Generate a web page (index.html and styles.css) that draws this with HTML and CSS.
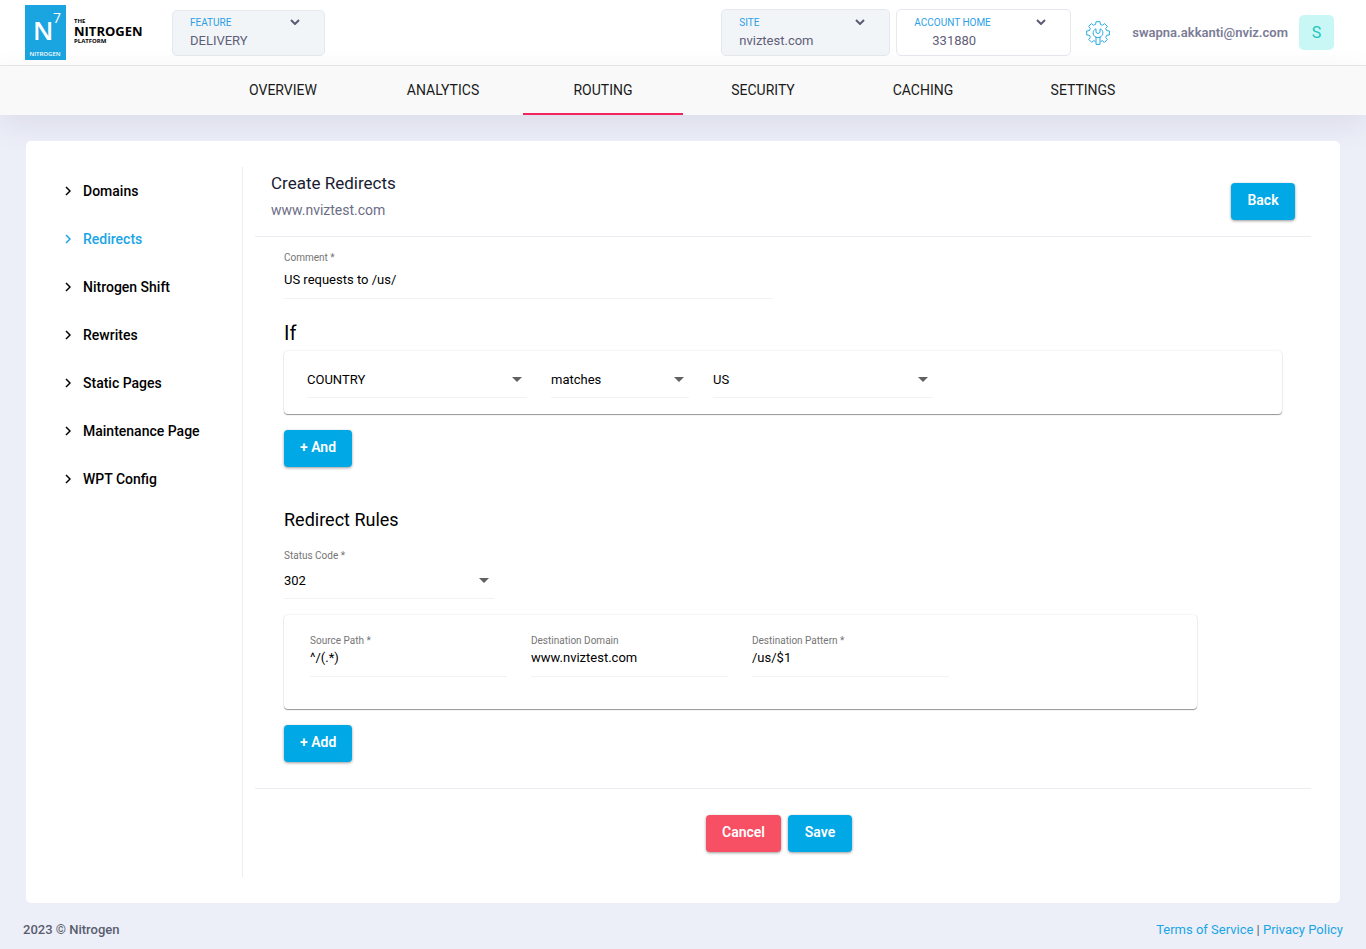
FILE: index.html
```html
<!DOCTYPE html>
<html lang="en">
<head>
<meta charset="utf-8">
<meta name="viewport" content="width=device-width, initial-scale=1">
<title>Create Redirects - Nitrogen</title>
<link rel="stylesheet" href="styles.css">
</head>
<body>
<header class="topbar">
  <a class="logo" href="#" aria-label="The Nitrogen Platform">
    <svg class="logo-art" viewBox="0 0 124 55" width="124" height="55">
      <rect width="41" height="55" fill="#1aa5e0"/>
      <g fill="#fff">
        <text x="8" y="35" font-size="26" font-weight="600">N</text>
        <text x="28" y="18" font-size="14">7</text>
        <text x="20" y="51" font-size="6" font-weight="600" text-anchor="middle">NITROGEN</text>
      </g>
      <g fill="#000" font-weight="700">
        <text x="49" y="18" font-size="6">THE</text>
        <text x="49" y="31" font-size="13">NITROGEN</text>
        <text x="49" y="38" font-size="6">PLATFORM</text>
      </g>
    </svg>
  </a>
  <button class="picker picker-feature" type="button">
    <span class="picker-head">FEATURE
      <svg class="chevron" viewBox="0 0 10 6" width="10" height="6"><path d="M1 1l4 4 4-4"/></svg>
    </span>
    <span class="picker-value">DELIVERY</span>
  </button>
  <div class="topbar-right">
    <button class="picker picker-site" type="button">
      <span class="picker-head">SITE
        <svg class="chevron" viewBox="0 0 10 6" width="10" height="6"><path d="M1 1l4 4 4-4"/></svg>
      </span>
      <span class="picker-value">nviztest.com</span>
    </button>
    <button class="picker picker-account" type="button">
      <span class="picker-head">ACCOUNT HOME
        <svg class="chevron" viewBox="0 0 10 6" width="10" height="6"><path d="M1 1l4 4 4-4"/></svg>
      </span>
      <span class="picker-value">331880</span>
    </button>
    <button class="gear" type="button" aria-label="Account settings">
      <svg viewBox="0 0 24 24" width="24" height="24" fill="none" stroke="#27aae1" stroke-width="1" stroke-linejoin="round" stroke-linecap="round">
        <path d="M9 20.3L7.6 19.7 5.7 21.4 2.7 18.4 4.3 16.4 3.5 14.3.7 14V10L3.5 9.5 4.3 7.5 2.7 5.4 5.4 2.6 7.6 4.3 9.6 3.4 10 .7H14L14.4 3.4 16.4 4.3 18.6 2.6 21.4 5.4 19.7 7.5 20.5 9.5 23.4 10V14L20.5 14.3 19.7 16.4 21.4 18.4 18.4 21.4 16.4 19.7 15 20.3"/>
        <path d="M10 16V23.4H14V16M10 16.3C5.8 14.5 6.4 9 10 7.8V11.4L12 12.6 14 11.4V7.8C17.6 9 18.2 14.5 14 16.3Z"/>
      </svg>
    </button>
    <span class="email">swapna.akkanti@nviz.com</span>
    <button class="avatar" type="button" aria-label="User menu">S</button>
  </div>
</header>

<nav class="tabs" aria-label="Main">
  <a class="tab" href="#">OVERVIEW</a>
  <a class="tab" href="#">ANALYTICS</a>
  <a class="tab tab-active" href="#" aria-current="page">ROUTING</a>
  <a class="tab" href="#">SECURITY</a>
  <a class="tab" href="#">CACHING</a>
  <a class="tab" href="#">SETTINGS</a>
</nav>

<main class="panel">
  <nav class="side" aria-label="Routing">
    <a class="side-link" href="#"><svg class="arrow" viewBox="0 0 6 10" width="6" height="10"><path d="M1 1l4 4-4 4"/></svg>Domains</a>
    <a class="side-link side-active" href="#"><svg class="arrow" viewBox="0 0 6 10" width="6" height="10"><path d="M1 1l4 4-4 4"/></svg>Redirects</a>
    <a class="side-link" href="#"><svg class="arrow" viewBox="0 0 6 10" width="6" height="10"><path d="M1 1l4 4-4 4"/></svg>Nitrogen Shift</a>
    <a class="side-link" href="#"><svg class="arrow" viewBox="0 0 6 10" width="6" height="10"><path d="M1 1l4 4-4 4"/></svg>Rewrites</a>
    <a class="side-link" href="#"><svg class="arrow" viewBox="0 0 6 10" width="6" height="10"><path d="M1 1l4 4-4 4"/></svg>Static Pages</a>
    <a class="side-link" href="#"><svg class="arrow" viewBox="0 0 6 10" width="6" height="10"><path d="M1 1l4 4-4 4"/></svg>Maintenance Page</a>
    <a class="side-link" href="#"><svg class="arrow" viewBox="0 0 6 10" width="6" height="10"><path d="M1 1l4 4-4 4"/></svg>WPT Config</a>
  </nav>

  <form class="content">
    <div class="content-head">
      <div class="heading">
        <h1 class="title">Create Redirects</h1>
        <p class="subtitle">www.nviztest.com</p>
      </div>
      <button class="btn" type="button">Back</button>
    </div>

    <div class="form-body">
      <div class="field field-comment">
        <label class="field-label" for="comment">Comment *</label>
        <input class="control" id="comment" type="text" value="US requests to /us/">
      </div>

      <h2 class="section-if">If</h2>
      <div class="card card-if">
        <div class="select select-wide">
          <select class="control" aria-label="Condition"><option>COUNTRY</option></select>
        </div>
        <div class="select select-narrow">
          <select class="control" aria-label="Operator"><option>matches</option></select>
        </div>
        <div class="select select-wide">
          <select class="control" aria-label="Value"><option>US</option></select>
        </div>
      </div>
      <button class="btn" type="button">+ And</button>

      <h2 class="section-rules">Redirect Rules</h2>
      <div class="field field-status">
        <label class="field-label" for="status">Status Code *</label>
        <div class="select">
          <select class="control" id="status"><option>302</option></select>
        </div>
      </div>
      <div class="card card-rules">
        <div class="field">
          <label class="field-label" for="source">Source Path *</label>
          <input class="control" id="source" type="text" value="^/(.*)">
        </div>
        <div class="field">
          <label class="field-label" for="domain">Destination Domain</label>
          <input class="control" id="domain" type="text" value="www.nviztest.com">
        </div>
        <div class="field">
          <label class="field-label" for="pattern">Destination Pattern *</label>
          <input class="control" id="pattern" type="text" value="/us/$1">
        </div>
      </div>
      <button class="btn" type="button">+ Add</button>
    </div>

    <div class="actions">
      <button class="btn btn-cancel" type="button">Cancel</button>
      <button class="btn" type="submit">Save</button>
    </div>
  </form>
</main>

<footer class="footer">
  <span class="copyright">2023 © Nitrogen</span>
  <span class="legal"><a href="#">Terms of Service</a> | <a href="#">Privacy Policy</a></span>
</footer>
</body>
</html>
```

FILE: styles.css
```css
* {
  box-sizing: border-box;
}

body {
  margin: 0;
  min-height: 100vh;
  display: flex;
  flex-direction: column;
  background: #eceff8;
  color: #000;
  font-family: Roboto, "Liberation Sans", sans-serif;
  font-size: 13px;
}

a {
  color: inherit;
  text-decoration: none;
}

h1, h2, p {
  margin: 0;
}

button, input, select {
  font: inherit;
  color: inherit;
}

button {
  cursor: pointer;
}

/* Top bar */
.topbar {
  display: flex;
  align-items: center;
  height: 66px;
  padding: 0 32px 0 25px;
  background: #fff;
  border-bottom: 1px solid #e8e8ea;
}

.logo-art {
  display: block;
  font-family: "Open Sans", "Noto Sans", sans-serif;
}

.topbar-right {
  display: flex;
  align-items: center;
  margin-left: auto;
}

.picker {
  display: flex;
  flex-direction: column;
  justify-content: center;
  height: 47px;
  padding: 0 24px 2px 17px;
  border: 1px solid #e6e8f0;
  border-radius: 5px;
  background: #f2f5f8;
  text-align: left;
}

.picker-head {
  display: flex;
  justify-content: space-between;
  align-items: center;
  align-self: stretch;
  color: #2b9fe6;
  font-size: 10px;
  line-height: 17px;
}

.picker-value {
  color: #5f6078;
  line-height: 19px;
}

.picker-feature {
  width: 153px;
  height: 46px;
  margin-left: 23px;
}

.picker-site {
  width: 169px;
}

.picker-account {
  width: 175px;
  margin-left: 6px;
  background: #fff;
}

.picker-account .picker-value {
  padding-left: 18px;
}

.chevron {
  fill: none;
  stroke: #5a5c74;
  stroke-width: 2;
}

.gear {
  display: flex;
  margin: 0 22px 0 15px;
  padding: 0;
  border: 0;
  background: none;
}

.email {
  color: #7b7c96;
  font-weight: 600;
}

.avatar {
  width: 35px;
  height: 35px;
  margin-left: 11px;
  padding: 0;
  border: 0;
  border-radius: 5px;
  background: #c9f7f5;
  color: #1bc5bd;
  font-size: 16px;
}

/* Main tabs */
.tabs {
  display: flex;
  justify-content: center;
  background: #f9f9f9;
  box-shadow: 0 10px 30px rgba(82, 63, 105, 0.1);
}

.tab {
  width: 160px;
  padding-top: 1px;
  border-bottom: 2px solid transparent;
  color: #1a1a1a;
  font-size: 14px;
  line-height: 46px;
  text-align: center;
}

.tab-active {
  border-color: #f4245e;
}

/* White panel */
.panel {
  display: flex;
  flex: 1;
  margin: 26px 26px 0;
  padding: 26px 29px 26px 0;
  border-radius: 5px;
  background: #fff;
  position: relative;
}

.side {
  flex: 0 0 217px;
  border-right: 1px solid #ebedf3;
}

.side-link {
  display: flex;
  align-items: center;
  gap: 12px;
  height: 48px;
  padding-left: 39px;
  font-size: 14px;
  font-weight: 500;
}

.side-active {
  color: #1aa5e6;
}

.arrow {
  fill: none;
  stroke: currentColor;
  stroke-width: 1.5;
}

.content {
  flex: 1;
  padding-left: 12px;
}

.content-head {
  display: flex;
  justify-content: space-between;
  align-items: center;
  height: 70px;
  padding: 0 16px;
  border-bottom: 1px solid #ebedf2;
}

.heading {
  padding-bottom: 10px;
}

.title {
  color: #181c32;
  font-size: 17px;
  font-weight: 400;
  line-height: 26px;
}

.subtitle {
  color: #6c6d85;
  font-size: 14px;
  line-height: 28px;
}

.form-body {
  padding: 13px 29px 26px;
}

/* Buttons */
.btn {
  min-width: 64px;
  height: 37px;
  padding: 0 16px 3px;
  border: 0;
  border-radius: 4px;
  background: #00a8e6;
  color: #fff;
  font-size: 14px;
  font-weight: 600;
  box-shadow: 0 1px 3px rgba(0, 0, 0, 0.4);
}

.btn-cancel {
  background: #f74f63;
}

/* Fields */
.field {
  display: flex;
  flex-direction: column;
}

.field-label {
  color: #757575;
  font-size: 10px;
  line-height: 15px;
}

.control {
  display: block;
  width: 100%;
  height: 34px;
  padding: 0;
  border: 0;
  border-bottom: 1px solid #f2f2f3;
  border-radius: 0;
  outline: 0;
  appearance: none;
  background: transparent;
}

.field-comment {
  width: 49%;
}

.select {
  position: relative;
}

.select .control {
  height: 36px;
}

.select::after {
  content: "";
  position: absolute;
  top: 15px;
  right: 5px;
  border: 5px solid transparent;
  border-top-color: #616161;
  border-bottom: 0;
  pointer-events: none;
}

.field-comment .control {
  padding-bottom: 4px;
}

.section-if {
  margin-top: 20px;
  font-size: 20px;
  font-weight: 400;
  line-height: 28px;
}

.section-rules {
  margin-top: 40px;
  font-size: 18px;
  font-weight: 400;
  line-height: 26px;
}

.card {
  display: flex;
  gap: 24px;
  margin-bottom: 16px;
  border-radius: 4px;
  box-shadow: 0 1px 1px rgba(0, 0, 0, 0.4), 0 0 2px rgba(0, 0, 0, 0.12);
}

.card-if {
  margin-top: 4px;
  padding: 11px 23px 16px;
}

.select-wide {
  flex: 0 1 220px;
}

.select-narrow {
  flex: 0 1 138px;
}

.field-status {
  width: 21%;
  margin: 15px 0 16px;
}

.card-rules {
  max-width: 913px;
  padding: 18px 26px 32px;
}

.card-rules .field {
  flex: 0 1 197px;
}

.card-rules .control {
  height: 29px;
  padding-bottom: 10px;
}

.actions {
  display: flex;
  justify-content: center;
  gap: 7px;
  padding: 26px 8px 0 0;
  border-top: 1px solid #ebedf2;
}

/* Footer */
.footer {
  display: flex;
  justify-content: space-between;
  align-items: center;
  height: 46px;
  padding: 6px 23px 0;
  color: #595d6e;
}

.copyright {
  font-weight: 500;
}

.legal a {
  color: #1aa5e6;
}
```
